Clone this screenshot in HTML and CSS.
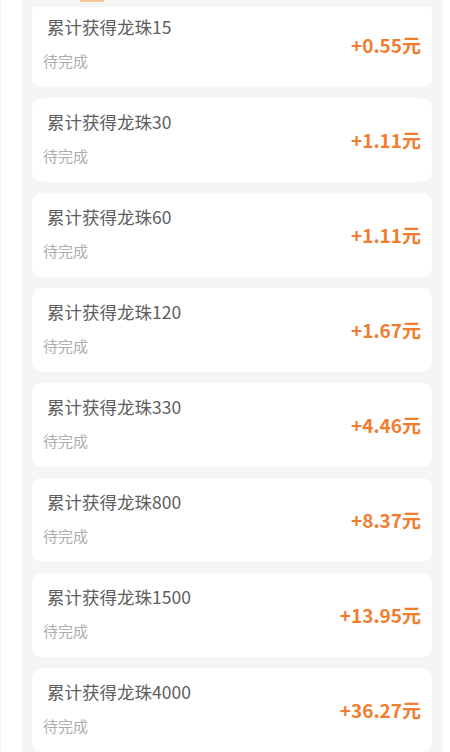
FILE: index.html
```html
<!DOCTYPE html>
<html lang="zh-CN">
<head>
    <meta charset="UTF-8">
    <meta name="viewport" content="width=device-width, initial-scale=1.0">
    <title>龙珠任务</title>
    <link rel="stylesheet" href="styles.css">
</head>
<body>
    <div class="page">
        <div class="panel">
            <div class="tab-strip">
                <span class="tab-line"></span>
            </div>
            <div class="list">
                <div class="track">
                    <div class="task">
                        <div class="info">
                            <div class="title">累计获得龙珠15</div>
                            <div class="status">待完成</div>
                        </div>
                        <div class="reward">+0.55元</div>
                    </div>
                    <div class="task">
                        <div class="info">
                            <div class="title">累计获得龙珠30</div>
                            <div class="status">待完成</div>
                        </div>
                        <div class="reward">+1.11元</div>
                    </div>
                    <div class="task">
                        <div class="info">
                            <div class="title">累计获得龙珠60</div>
                            <div class="status">待完成</div>
                        </div>
                        <div class="reward">+1.11元</div>
                    </div>
                    <div class="task">
                        <div class="info">
                            <div class="title">累计获得龙珠120</div>
                            <div class="status">待完成</div>
                        </div>
                        <div class="reward">+1.67元</div>
                    </div>
                    <div class="task">
                        <div class="info">
                            <div class="title">累计获得龙珠330</div>
                            <div class="status">待完成</div>
                        </div>
                        <div class="reward">+4.46元</div>
                    </div>
                    <div class="task">
                        <div class="info">
                            <div class="title">累计获得龙珠800</div>
                            <div class="status">待完成</div>
                        </div>
                        <div class="reward">+8.37元</div>
                    </div>
                    <div class="task">
                        <div class="info">
                            <div class="title">累计获得龙珠1500</div>
                            <div class="status">待完成</div>
                        </div>
                        <div class="reward">+13.95元</div>
                    </div>
                    <div class="task">
                        <div class="info">
                            <div class="title">累计获得龙珠4000</div>
                            <div class="status">待完成</div>
                        </div>
                        <div class="reward">+36.27元</div>
                    </div>
                </div>
            </div>
        </div>
    </div>
</body>
</html>
```

FILE: styles.css
```css
* {
    margin: 0;
    padding: 0;
    box-sizing: border-box;
}

body {
    background-color: #fff;
    font-family: "Noto Sans CJK SC", "Noto Sans", sans-serif;
    height: 752px;
    overflow: hidden;
}

.page {
    height: 752px;
    padding: 0 8px 0 21px;
    border-left: 1px solid #f2f2f2;
}

.panel {
    width: 421px;
    height: 752px;
    background-color: #f5f5f5;
    border-right: 1px solid #f7f7f7;
}

/* 顶部标签的下划线，只露出一点 */
.tab-strip {
    position: relative;
    height: 7px;
    border-top: 2px solid #f5f5f5;
}

.tab-line {
    position: absolute;
    top: -2px;
    left: 58px;
    width: 24px;
    height: 2px;
    background-color: #f8c89c;
}

.list {
    height: 745px;
    overflow: hidden;
}

.track {
    margin-top: -4px;
    padding: 0 10px;
    display: flex;
    flex-direction: column;
    gap: 11px;
}

.task {
    height: 84px;
    background-color: #fff;
    border-radius: 10px;
    padding: 12px 11px 16px 11px;
    display: flex;
    align-items: center;
    justify-content: space-between;
}

.info {
    display: flex;
    flex-direction: column;
    gap: 12px;
}

.title {
    padding-left: 4px;
    font-size: 17.5px;
    line-height: 24px;
    color: #5e5e5e;
}

.status {
    font-size: 15px;
    line-height: 20px;
    color: #adadad;
}

.reward {
    margin-top: 2px;
    font-size: 19px;
    font-weight: bold;
    color: #f07d30;
}
```
